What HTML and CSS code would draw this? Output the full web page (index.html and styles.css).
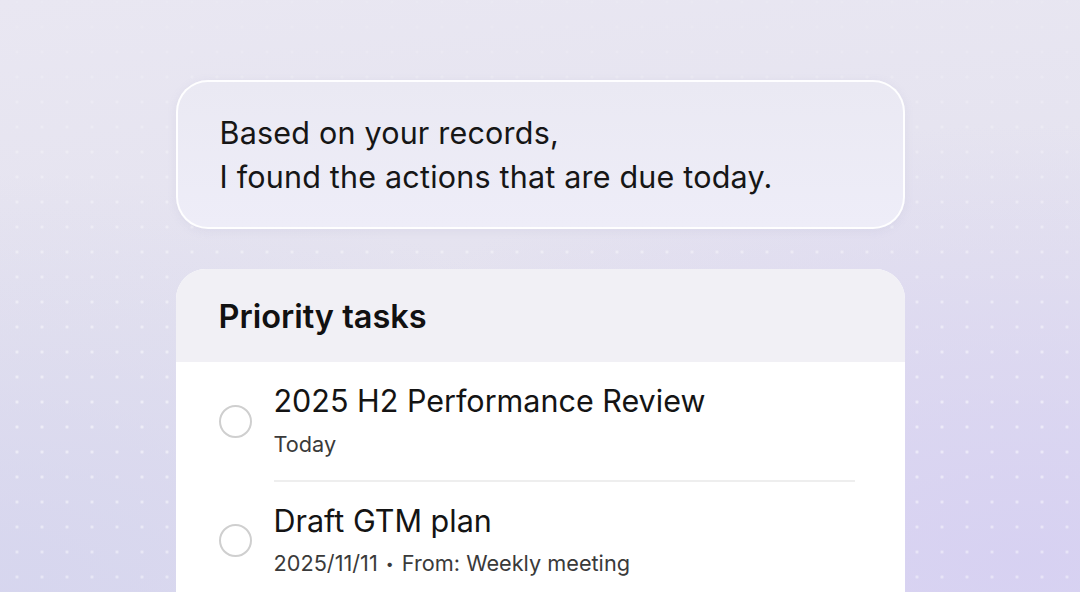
FILE: index.html
```html
<!DOCTYPE html>
<html>
<head>
<meta charset="utf-8">
<link rel="stylesheet" href="styles.css">
</head>
<body>
<div class="page">
  <div class="column">
    <div class="bubble">
      <p class="bubble-text">Based on your records,<br>I found the actions that are due today.</p>
    </div>
    <div class="card">
      <div class="card-header">Priority tasks</div>
      <div class="card-body">
        <div class="task">
          <span class="check"></span>
          <div class="task-text">
            <div class="task-title">2025 H2 Performance Review</div>
            <div class="task-meta">Today</div>
          </div>
        </div>
        <div class="task">
          <span class="check"></span>
          <div class="task-text">
            <div class="task-title">Draft GTM plan</div>
            <div class="task-meta">2025/11/11 <span class="sep">•</span> From: Weekly meeting</div>
          </div>
        </div>
      </div>
    </div>
  </div>
</div>
</body>
</html>
```
FILE: styles.css
```css
html, body {
  margin: 0;
  padding: 0;
  width: 1080px;
  height: 592px;
  overflow: hidden;
}
body {
  font-family: Inter, "Noto Sans", sans-serif;
  color: #141414;
}
.page {
  position: relative;
  width: 1080px;
  height: 592px;
  overflow: hidden;
  background:
    radial-gradient(ellipse at 95% 95%, rgba(214,208,242,0.9) 0%, rgba(214,208,242,0) 55%),
    radial-gradient(ellipse at 0% 100%, rgba(212,212,238,0.8) 0%, rgba(212,212,238,0) 50%),
    linear-gradient(175deg, #e9e7f2 0%, #e4e2ef 50%, #dedbef 100%);
  display: flex;
  justify-content: center;
  box-sizing: border-box;
  padding-top: 80px;
}
.page::before {
  content: "";
  position: absolute;
  inset: 0;
  background: radial-gradient(circle, rgba(255,255,255,0.6) 1.2px, transparent 1.9px) 4.5px -10.5px / 25px 25px;
  -webkit-mask-image: linear-gradient(180deg, rgba(0,0,0,0.15) 0%, rgba(0,0,0,0.6) 35%, rgba(0,0,0,0.9) 70%, rgba(0,0,0,0.7) 100%);
  mask-image: linear-gradient(180deg, rgba(0,0,0,0.15) 0%, rgba(0,0,0,0.6) 35%, rgba(0,0,0,0.9) 70%, rgba(0,0,0,0.7) 100%);
  pointer-events: none;
}
.column {
  position: relative;
  z-index: 1;
  width: 729px;
  display: flex;
  flex-direction: column;
  gap: 40px;
}
.bubble {
  flex: none;
  height: 149px;
  box-sizing: border-box;
  border-radius: 32px;
  border: 2px solid rgba(255,255,255,0.92);
  background: linear-gradient(180deg, #eae9f3 0%, #eeedf8 100%);
  box-shadow: 0 2px 10px rgba(150,145,190,0.12);
  display: flex;
  align-items: center;
  padding: 0 42px;
}
.bubble-text {
  margin: 0;
  font-size: 30.5px;
  line-height: 44px;
  letter-spacing: 0.2px;
  color: #161616;
  padding-top: 1px;
}
.card {
  flex: 1;
  min-height: 0;
  border-radius: 30px 30px 0 0;
  overflow: hidden;
  background: #ffffff;
}
.card-header {
  background: #f1f0f5;
  height: 93px;
  box-sizing: border-box;
  padding: 2px 43px 0;
  display: flex;
  align-items: center;
  font-size: 32.5px;
  font-weight: 600;
  color: #111;
}
.card-body {
  padding: 0 50px 0 43px;
}
.task {
  display: flex;
  align-items: center;
  gap: 22px;
}
.task + .task .task-text {
  border-top: 2px solid #eeeeee;
  padding-top: 21px;
}
.check {
  width: 29px;
  height: 29px;
  border: 2px solid #cfcfcf;
  border-radius: 50%;
  flex: none;
  margin-top: 1px;
}
.task-text {
  flex: 1;
  padding: 21px 0 22px;
}
.task-title {
  font-size: 30.5px;
  line-height: 36px;
  color: #141414;
}
.task-meta {
  font-size: 21.7px;
  line-height: 28px;
  margin-top: 11px;
  color: #3a3a3a;
}
.task + .task .task-meta {
  margin-top: 10px;
}
.sep {
  font-size: 14px;
  vertical-align: 2px;
  margin: 0 2px;
}
```
